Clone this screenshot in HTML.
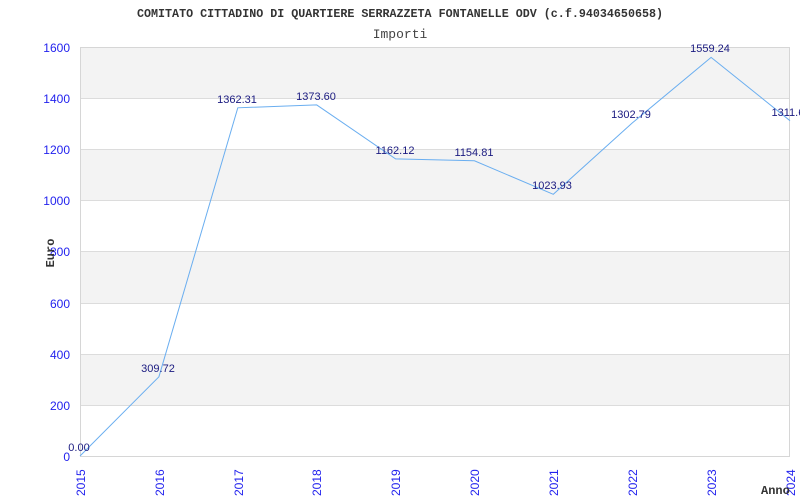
<!DOCTYPE html>
<html><head><meta charset="utf-8"><style>html,body{margin:0;padding:0;background:#fff;width:800px;height:500px;overflow:hidden}</style></head>
<body>
<svg width="800" height="500" xmlns="http://www.w3.org/2000/svg">
<rect x="80" y="47" width="710" height="51" fill="#f3f3f3"/>
<rect x="80" y="149" width="710" height="51" fill="#f3f3f3"/>
<rect x="80" y="251" width="710" height="52" fill="#f3f3f3"/>
<rect x="80" y="354" width="710" height="51" fill="#f3f3f3"/>
<g stroke="#dcdcdc" stroke-width="1">
<line x1="80" y1="98.5" x2="790" y2="98.5"/><line x1="80" y1="149.5" x2="790" y2="149.5"/>
<line x1="80" y1="200.5" x2="790" y2="200.5"/><line x1="80" y1="251.5" x2="790" y2="251.5"/>
<line x1="80" y1="303.5" x2="790" y2="303.5"/><line x1="80" y1="354.5" x2="790" y2="354.5"/>
<line x1="80" y1="405.5" x2="790" y2="405.5"/>
</g>
<rect x="80.5" y="47.5" width="709" height="409" fill="none" stroke="#d6d6d6"/>
<text x="400" y="17" text-anchor="middle" font-family="Liberation Mono, monospace" font-weight="bold" font-size="11.7" fill="#333">COMITATO CITTADINO DI QUARTIERE SERRAZZETA FONTANELLE ODV (c.f.94034650658)</text>
<text x="400" y="38" text-anchor="middle" font-family="Liberation Mono, monospace" font-size="13" fill="#444">Importi</text>
<g font-family="Liberation Sans, sans-serif" font-size="12" fill="#2222ee" text-anchor="end">
<text x="70" y="52">1600</text><text x="70" y="103">1400</text><text x="70" y="154">1200</text>
<text x="70" y="205">1000</text><text x="70" y="256">800</text><text x="70" y="308">600</text>
<text x="70" y="359">400</text><text x="70" y="410">200</text><text x="70" y="461">0</text>
</g>
<g font-family="Liberation Sans, sans-serif" font-size="12" fill="#2222ee" text-anchor="start">
<text transform="translate(85,496) rotate(-90)">2015</text>
<text transform="translate(164,496) rotate(-90)">2016</text>
<text transform="translate(243,496) rotate(-90)">2017</text>
<text transform="translate(321,496) rotate(-90)">2018</text>
<text transform="translate(400,496) rotate(-90)">2019</text>
<text transform="translate(479,496) rotate(-90)">2020</text>
<text transform="translate(558,496) rotate(-90)">2021</text>
<text transform="translate(637,496) rotate(-90)">2022</text>
<text transform="translate(716,496) rotate(-90)">2023</text>
<text transform="translate(795,496) rotate(-90)">2024</text>
</g>
<text transform="translate(54,253) rotate(-90)" text-anchor="middle" font-family="Liberation Mono, monospace" font-weight="bold" font-size="12" fill="#333">Euro</text>
<text x="761" y="494" font-family="Liberation Mono, monospace" font-weight="bold" font-size="12" fill="#333">Anno</text>
<polyline fill="none" stroke="#6aaef0" stroke-width="1" points="80,456 158.9,376.8 237.8,107.8 316.7,104.9 395.6,158.9 474.4,160.8 553.3,194.3 632.2,123 711.1,57.4 790,120.7"/>
<g font-family="Liberation Sans, sans-serif" font-size="11" fill="#1a1a80" text-anchor="middle">
<text x="79" y="451">0.00</text><text x="158" y="372">309.72</text><text x="237" y="103">1362.31</text>
<text x="316" y="100">1373.60</text><text x="395" y="154">1162.12</text><text x="474" y="156">1154.81</text>
<text x="552" y="189">1023.93</text><text x="631" y="118">1302.79</text><text x="710" y="52">1559.24</text>
<text x="791" y="116">1311.64</text>
</g>
</svg>
</body></html>
